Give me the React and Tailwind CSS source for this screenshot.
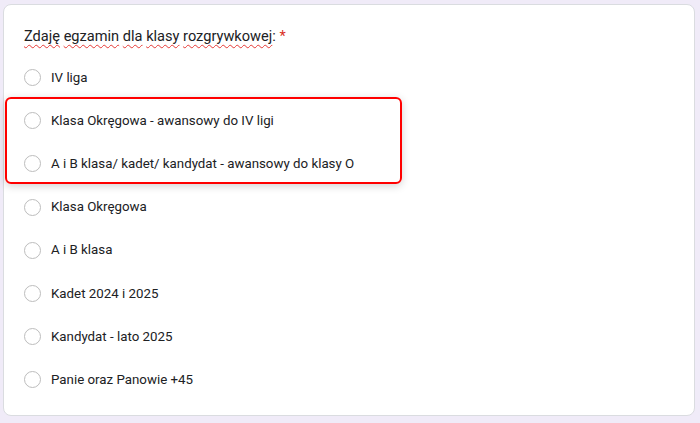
import React from "react";

const options = [
  "IV liga",
  "Klasa Okręgowa - awansowy do IV ligi",
  "A i B klasa/ kadet/ kandydat - awansowy do klasy O",
  "Klasa Okręgowa",
  "A i B klasa",
  "Kadet 2024 i 2025",
  "Kandydat - lato 2025",
  "Panie oraz Panowie +45",
];

const W = ({ children }) => (
  <span className="underline decoration-wavy decoration-[#e53935] decoration-1 underline-offset-[3px]">
    {children}
  </span>
);

export default function App() {
  return (
    <div
      className="w-[700px] h-[423px] bg-[#f0ebf8] pt-[4px] pl-[3px] overflow-hidden"
      style={{ fontFamily: "Roboto, 'Liberation Sans', sans-serif" }}
    >
      <div className="relative w-[692px] h-[412px] bg-white border border-[#dadce0] rounded-[8px] pt-[19px]">
        <div className="pl-[20px] text-[14.6px] leading-[24px] text-[#202124]">
          <W>Zdaję</W> <W>egzamin</W> <W>dla</W> <W>klasy</W> <W>rozgrywkowej</W>:{" "}
          <span className="text-[#d93025]">*</span>
        </div>
        <div className="mt-[8px] flex flex-col">
          {options.map((o) => (
            <div key={o} className="h-[43.2px] flex items-center pl-[20px]">
              <div className="w-[17px] h-[17px] rounded-full border-[1.5px] border-[#bdbdbd] shrink-0" />
              <span className="ml-[10px] text-[13.3px] text-[#202124]">{o}</span>
            </div>
          ))}
        </div>
        <div className="absolute left-[1px] top-[92px] w-[397px] h-[87px] border-2 border-[#ff0000] rounded-[6px] shadow-[0_2px_8px_rgba(0,0,0,0.18)] pointer-events-none" />
      </div>
    </div>
  );
}
